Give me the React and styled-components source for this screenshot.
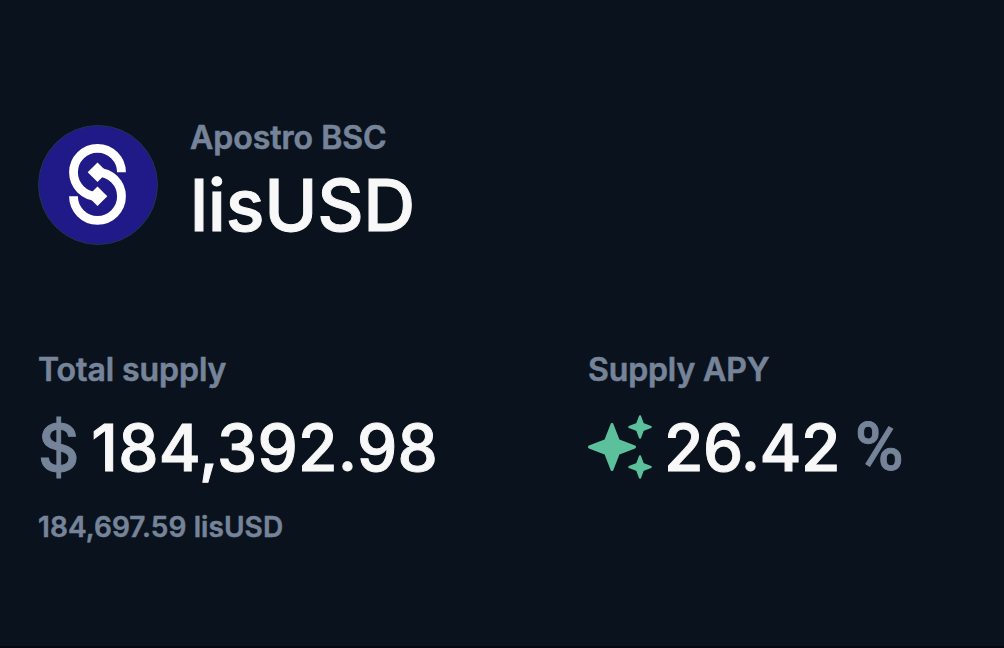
import React from 'react';
import styled, { createGlobalStyle } from 'styled-components';

const GlobalStyle = createGlobalStyle`
  *, *:before, *:after {
    box-sizing: border-box;
  }

  body {
    margin: 0;
    background: #0a121d;
    font-family: Inter, 'Liberation Sans', sans-serif;
    -webkit-font-smoothing: antialiased;
  }
`;

const Page = styled.main`
  min-height: 648px;
  padding: 118px 38px 0;
  background: #0a121d;
  border-bottom: 2px solid #04080f;
`;

const Header = styled.header`
  display: flex;
  align-items: flex-start;
  gap: 32px;
`;

const TokenLogo = styled.svg`
  width: 120px;
  height: 120px;
  margin-top: 7px;
  flex-shrink: 0;
`;

const Label = styled.div`
  font-size: 32px;
  font-weight: 600;
  line-height: 40px;
  letter-spacing: ${({ $tracking }) => $tracking || '0'};
  color: #76849a;
  -webkit-text-stroke: 0.6px currentColor;
  white-space: nowrap;
`;

const TokenName = styled.h1`
  margin: 2px 0 0;
  font-size: 72px;
  font-weight: 500;
  line-height: 90px;
  letter-spacing: -0.3px;
  color: #f8f8f8;
  -webkit-text-stroke: 1px currentColor;
`;

const Stats = styled.section`
  display: grid;
  grid-template-columns: 550px 1fr;
  margin-top: 100px;
`;

const Value = styled.div`
  display: flex;
  align-items: center;
  gap: 12px;
  margin-top: 16px;
  font-size: 64px;
  font-weight: 500;
  line-height: 80px;
  color: #f8f8f8;
  -webkit-text-stroke: 1px currentColor;
  white-space: nowrap;
`;

const Amount = styled.span`
  padding-top: 2px;
  letter-spacing: ${({ $tracking }) => $tracking || '0'};
`;

const Unit = styled.span`
  padding-top: 2px;
  color: #76849a;
`;

const Percent = styled(Unit)`
  margin-left: 3px;
  font-family: Roboto, Inter, sans-serif;
  font-size: 66px;
`;

const SubValue = styled.div`
  margin-top: 21px;
  font-size: 28px;
  font-weight: 600;
  line-height: 36px;
  letter-spacing: 0.08px;
  color: #76849a;
  -webkit-text-stroke: 0.5px currentColor;
`;

const SparkleIcon = styled.svg`
  width: 64px;
  height: 64px;
  flex-shrink: 0;
  fill: #5bc09b;
  stroke: #5bc09b;
  stroke-linejoin: round;
`;

const LisUsdLogo = () => (
  <TokenLogo viewBox="0 0 120 120" aria-hidden="true">
    <circle cx="60" cy="60" r="59.5" fill="#1f1a87" stroke="#20344a" />
    <g fill="none" stroke="#fff" strokeWidth="8.8">
      <path d="M83.5 47.3A24 24 0 1 0 59.5 71.3" />
      <path d="M35.5 71.3A24 24 0 1 0 59.5 47.3" />
    </g>
    <path fill="#fff" d="M59.5 37.5L69.3 47.3L59.5 57.1L49.7 47.3Z" />
    <path fill="#fff" d="M59.5 61.5L69.3 71.3L59.5 81.1L49.7 71.3Z" />
  </TokenLogo>
);

const Sparkles = () => (
  <SparkleIcon viewBox="0 0 64 64" aria-hidden="true">
    <path strokeWidth="3" d="M24 9.5L30.3 25.7L46.5 32L30.3 38.3L24 54.5L17.7 38.3L1.5 32L17.7 25.7Z" />
    <path strokeWidth="2" d="M52 1.2L55 9L62.8 12L55 15L52 22.8L49 15L41.2 12L49 9Z" />
    <path strokeWidth="2" d="M52 41.2L55 49L62.8 52L55 55L52 62.8L49 55L41.2 52L49 49Z" />
  </SparkleIcon>
);

const App = () => {
  return (
    <>
      <GlobalStyle />
      <Page>
        <Header>
          <LisUsdLogo />
          <div>
            <Label>Apostro BSC</Label>
            <TokenName>lisUSD</TokenName>
          </div>
        </Header>
        <Stats>
          <div>
            <Label $tracking="-0.06px">Total supply</Label>
            <Value>
              <Unit>$</Unit>
              <Amount $tracking="0.3px">184,392.98</Amount>
            </Value>
            <SubValue>184,697.59 lisUSD</SubValue>
          </div>
          <div>
            <Label $tracking="-0.12px">Supply APY</Label>
            <Value>
              <Sparkles />
              <Amount $tracking="-0.5px">26.42</Amount>
              <Percent>%</Percent>
            </Value>
          </div>
        </Stats>
      </Page>
    </>
  );
};

export default App;
